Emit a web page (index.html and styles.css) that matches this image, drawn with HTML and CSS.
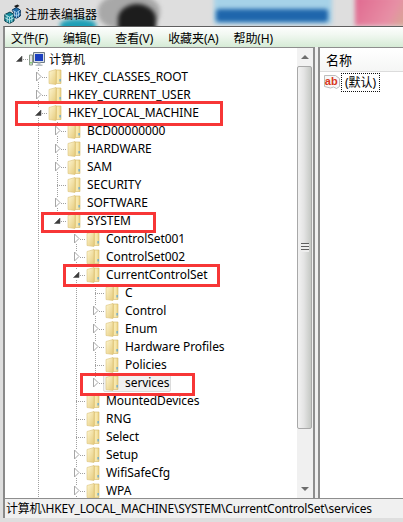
FILE: index.html
```html
<!DOCTYPE html>
<html lang="zh-CN">
<head>
<meta charset="utf-8">
<title>注册表编辑器</title>
<link rel="stylesheet" href="styles.css">
</head>
<body>
<svg class="defs" width="0" height="0">
  <defs>
    <linearGradient id="fl" x1="0" y1="0" x2="1" y2="1"><stop offset="0" stop-color="#fdf6d2"/><stop offset="1" stop-color="#e6cb7c"/></linearGradient>
    <linearGradient id="fr" x1="0" y1="0" x2="1" y2="0"><stop offset="0" stop-color="#cfa94c"/><stop offset=".45" stop-color="#fbeeb6"/><stop offset="1" stop-color="#ead083"/></linearGradient>
    <symbol id="folder" viewBox="0 0 14 16">
      <path d="M7 1h6v13.500h-6z" fill="url(#fr)" stroke="#d4b868" stroke-width=".6"/>
      <path d="M1 2.500 8 .5v15l-7-1z" fill="url(#fl)" stroke="#dcc27a" stroke-width=".6"/>
      <path d="M11.500 10h1.200v2.500h-1.200z" fill="#5aa5dc"/>
    </symbol>
    <symbol id="closed" viewBox="0 0 7 11">
      <path d="M1.500 1v9l4.500-4.500z" fill="#fff" stroke="#a6a6a6"/>
    </symbol>
    <symbol id="open" viewBox="0 0 7 11">
      <path d="M.5 8.500 6 3v5.500z" fill="#3c3c3c" stroke="#555" stroke-width=".6"/>
    </symbol>
  </defs>
</svg>
<div class="page">
  <div class="backdrop">
    <span class="blob b-gray"></span>
    <span class="blob b-dark"></span>
    <span class="blob b-teal"></span>
    <span class="blob b-sky"></span>
    <span class="blob b-blue"></span>
    <span class="blob b-pink"></span>
  </div>
  <header class="titlebar">
    <svg class="appicon" width="17" height="20" viewBox="0 0 17 20">
      <path d="M.8 10.500 6 8l4 2.500v6.500L5.500 19.500.8 17z" fill="#148a9c" stroke="#0b3f4c"/>
      <path d="M.8 10.500 5.500 13v6.500M5.500 13l4.500-2.500M3.200 11.800v6.400M7.800 11.800v6.400M.8 13.700l4.700 2.500 4.500-2.500" fill="none" stroke="#c9eef0" stroke-width=".8"/>
      <path d="M8 6l4.500-2.500L16.300 6v6l-3.800 2.300L10 13V9z" fill="#1d6aa8" stroke="#0c3458"/>
      <path d="M8.500 6.300l4 2.200v5.800M12.500 8.500 16.300 6M10.500 7.500v5M14.500 7.200v5.500M10 10.500l2.500 1.300 3.800-2.300" fill="none" stroke="#c6e4f6" stroke-width=".7"/>
      <path d="M10 2 13.500.5 15.500 2 12 3.800z" fill="#1b1b1b"/>
    </svg>
    <span class="apptitle">注册表编辑器</span>
  </header>
  <main class="window">
    <nav class="menubar">
      <span>文件(F)</span><span>编辑(E)</span><span>查看(V)</span><span>收藏夹(A)</span><span>帮助(H)</span>
    </nav>
    <div class="panes">
      <section class="treepane">
        <div class="tree">
          <div class="row">
            <span class="c t nostem"><svg class="arrow"><use href="#open"/></svg></span>
            <svg class="pc" width="16" height="16" viewBox="0 0 16 16">
              <path d="M.5 4h3v10h-3z" fill="#e6e6e6" stroke="#8a9a8a"/>
              <path d="M1.300 11h1.400v1.500h-1.400z" fill="#62c04a"/>
              <path d="M4.500 1.500h11v10h-11z" fill="#d9dfe6" stroke="#6d7a86"/>
              <path d="M6 3h8v7h-8z" fill="#1a3fc0"/>
              <path d="M8.500 11.500h3v2h-3zM6.500 13.500h7v1.500h-7z" fill="#b9c0c6"/>
            </svg>
            <span class="lbl cjk">计算机</span>
          </div>
          <div class="row"><span class="c"></span><span class="c t"><svg class="arrow"><use href="#closed"/></svg></span><svg class="fd"><use href="#folder"/></svg><span class="lbl">HKEY_CLASSES_ROOT</span></div>
          <div class="row"><span class="c"></span><span class="c t"><svg class="arrow"><use href="#closed"/></svg></span><svg class="fd"><use href="#folder"/></svg><span class="lbl">HKEY_CURRENT_USER</span></div>
          <div class="row"><span class="c"></span><span class="c t"><svg class="arrow"><use href="#open"/></svg></span><svg class="fd"><use href="#folder"/></svg><span class="lbl">HKEY_LOCAL_MACHINE</span></div>

          <div class="row"><span class="c"></span><span class="c g"></span><span class="c t"><svg class="arrow"><use href="#closed"/></svg></span><svg class="fd"><use href="#folder"/></svg><span class="lbl">BCD00000000</span></div>
          <div class="row"><span class="c"></span><span class="c g"></span><span class="c t"><svg class="arrow"><use href="#closed"/></svg></span><svg class="fd"><use href="#folder"/></svg><span class="lbl">HARDWARE</span></div>
          <div class="row"><span class="c"></span><span class="c g"></span><span class="c t"><svg class="arrow"><use href="#closed"/></svg></span><svg class="fd"><use href="#folder"/></svg><span class="lbl">SAM</span></div>
          <div class="row"><span class="c"></span><span class="c g"></span><span class="c t"></span><svg class="fd"><use href="#folder"/></svg><span class="lbl">SECURITY</span></div>
          <div class="row"><span class="c"></span><span class="c g"></span><span class="c t"><svg class="arrow"><use href="#closed"/></svg></span><svg class="fd"><use href="#folder"/></svg><span class="lbl">SOFTWARE</span></div>
          <div class="row"><span class="c"></span><span class="c g"></span><span class="c t last"><svg class="arrow"><use href="#open"/></svg></span><svg class="fd"><use href="#folder"/></svg><span class="lbl">SYSTEM</span></div>

          <div class="row"><span class="c"></span><span class="c g"></span><span class="c"></span><span class="c t"><svg class="arrow"><use href="#closed"/></svg></span><svg class="fd"><use href="#folder"/></svg><span class="lbl">ControlSet001</span></div>
          <div class="row"><span class="c"></span><span class="c g"></span><span class="c"></span><span class="c t"><svg class="arrow"><use href="#closed"/></svg></span><svg class="fd"><use href="#folder"/></svg><span class="lbl">ControlSet002</span></div>
          <div class="row"><span class="c"></span><span class="c g"></span><span class="c"></span><span class="c t"><svg class="arrow"><use href="#open"/></svg></span><svg class="fd"><use href="#folder"/></svg><span class="lbl">CurrentControlSet</span></div>

          <div class="row"><span class="c"></span><span class="c g"></span><span class="c"></span><span class="c g"></span><span class="c t"></span><svg class="fd"><use href="#folder"/></svg><span class="lbl">C</span></div>
          <div class="row"><span class="c"></span><span class="c g"></span><span class="c"></span><span class="c g"></span><span class="c t"><svg class="arrow"><use href="#closed"/></svg></span><svg class="fd"><use href="#folder"/></svg><span class="lbl">Control</span></div>
          <div class="row"><span class="c"></span><span class="c g"></span><span class="c"></span><span class="c g"></span><span class="c t"><svg class="arrow"><use href="#closed"/></svg></span><svg class="fd"><use href="#folder"/></svg><span class="lbl">Enum</span></div>
          <div class="row"><span class="c"></span><span class="c g"></span><span class="c"></span><span class="c g"></span><span class="c t"><svg class="arrow"><use href="#closed"/></svg></span><svg class="fd"><use href="#folder"/></svg><span class="lbl">Hardware Profiles</span></div>
          <div class="row"><span class="c"></span><span class="c g"></span><span class="c"></span><span class="c g"></span><span class="c t"></span><svg class="fd"><use href="#folder"/></svg><span class="lbl">Policies</span></div>
          <div class="row"><span class="c"></span><span class="c g"></span><span class="c"></span><span class="c g"></span><span class="c t last"><svg class="arrow"><use href="#closed"/></svg></span><span class="sel"><svg class="fd"><use href="#folder"/></svg><span class="lbl">services</span></span></div>

          <div class="row"><span class="c"></span><span class="c g"></span><span class="c"></span><span class="c t"></span><svg class="fd"><use href="#folder"/></svg><span class="lbl">MountedDevices</span></div>
          <div class="row"><span class="c"></span><span class="c g"></span><span class="c"></span><span class="c t"></span><svg class="fd"><use href="#folder"/></svg><span class="lbl">RNG</span></div>
          <div class="row"><span class="c"></span><span class="c g"></span><span class="c"></span><span class="c t"></span><svg class="fd"><use href="#folder"/></svg><span class="lbl">Select</span></div>
          <div class="row"><span class="c"></span><span class="c g"></span><span class="c"></span><span class="c t"><svg class="arrow"><use href="#closed"/></svg></span><svg class="fd"><use href="#folder"/></svg><span class="lbl">Setup</span></div>
          <div class="row"><span class="c"></span><span class="c g"></span><span class="c"></span><span class="c t"><svg class="arrow"><use href="#closed"/></svg></span><svg class="fd"><use href="#folder"/></svg><span class="lbl">WifiSafeCfg</span></div>
          <div class="row"><span class="c"></span><span class="c g"></span><span class="c"></span><span class="c t"><svg class="arrow"><use href="#closed"/></svg></span><svg class="fd"><use href="#folder"/></svg><span class="lbl">WPA</span></div>
        </div>
        <div class="scrollbar">
          <div class="sbtn"><span class="up"></span></div>
          <div class="thumb"><span class="grip"></span></div>
          <div class="track"></div>
          <div class="sbtn"><span class="down"></span></div>
        </div>
      </section>
      <section class="listpane">
        <div class="listhead">名称</div>
        <div class="listrow">
          <svg class="abicon" width="16" height="16" viewBox="0 0 16 16">
            <path d="M.5 1.500h11l4 3v8l-3 2-3-1.500-3 1-6-1.500z" fill="#f7f7f7" stroke="#bdbdbd"/>
            <text x=".8" y="11" class="abtext">ab</text>
          </svg>
          <span class="focus">(默认)</span>
        </div>
      </section>
    </div>
    <footer class="status">计算机\HKEY_LOCAL_MACHINE\SYSTEM\CurrentControlSet\services</footer>
  </main>
  <div class="mark m1"></div>
  <div class="mark m2"></div>
  <div class="mark m3"></div>
  <div class="mark m4"></div>
</div>
</body>
</html>
```
FILE: styles.css
```css
* { box-sizing: border-box; }
html, body { margin: 0; padding: 0; }
body {
  width: 403px;
  height: 522px;
  overflow: hidden;
  font-family: "Noto Sans", "Noto Sans CJK SC", sans-serif;
  font-size: 12px;
  color: #000;
}
.defs { position: absolute; }
.page {
  position: relative;
  width: 403px;
  height: 522px;
  padding-left: 3px;
  overflow: hidden;
  background: #dedede;
}
.backdrop {
  position: absolute;
  left: 0;
  top: 0;
  width: 403px;
  height: 30px;
  overflow: hidden;
}
.blob { position: absolute; display: block; filter: blur(2px); }
.b-gray { left: 98px; top: -6px; width: 62px; height: 36px; background: #a8a8a8; border-radius: 45%; }
.b-dark { left: 118px; top: 4px; width: 38px; height: 30px; background: #1d1d1d; border-radius: 50% 50% 10% 10%; }
.b-teal { left: 60px; top: 19px; width: 36px; height: 14px; background: #1e9fb6; border-radius: 40%; }
.b-sky { left: 214px; top: -6px; width: 118px; height: 30px; background: #a6d2e8; }
.b-blue { left: 216px; top: 9px; width: 112px; height: 13px; background: #1f66ac; border-radius: 3px; }
.b-pink { left: 355px; top: -4px; width: 54px; height: 30px; background: linear-gradient(120deg, #e0688f, #e78fa5 65%, #d2ae90); }
.titlebar {
  position: relative;
  display: flex;
  align-items: center;
  height: 26px;
  margin-left: 1px;
}
.appicon { display: block; flex: none; margin-top: 2px; }
.apptitle {
  margin-left: 4px;
  font-family: "Noto Sans CJK SC", sans-serif;
  font-size: 12px;
  color: #000;
}
.window {
  position: relative;
  width: 400px;
  height: 492px;
  border-top: 1px solid #5f5f5f;
  border-left: 2px solid #8a8a8a;
  background: #fff;
  display: flex;
  flex-direction: column;
}
.menubar {
  flex: none;
  height: 20px;
  display: flex;
  gap: 15px;
  align-items: center;
  padding-left: 6px;
  letter-spacing: -.1px;
  background: linear-gradient(#fbfdfb, #f1f8f1 35%, #d6ebd6);
  border-top: 1px solid #fff;
}
.panes {
  flex: none;
  height: 451px;
  display: flex;
  background: #f0f0f0;
}
.treepane {
  width: 310px;
  flex: none;
  display: flex;
  background: #fff;
  border-top: 1px solid #8e8e8e;
  border-right: 2px solid #8e8e8e;
  overflow: hidden;
}
.tree {
  flex: 1;
  min-width: 0;
  padding: 2px 0 0 5px;
  overflow: hidden;
}
.row {
  display: flex;
  align-items: center;
  height: 18px;
  flex: none;
  white-space: nowrap;
}
.c {
  flex: none;
  width: 19px;
  height: 18px;
  position: relative;
  display: block;
}
.g {
  background: repeating-linear-gradient(#a0a0a0 0 1px, transparent 1px 2px) 9px 0 / 1px 18px no-repeat;
}
.t {
  background:
    repeating-linear-gradient(#a0a0a0 0 1px, transparent 1px 2px) 9px 0 / 1px 18px no-repeat,
    repeating-linear-gradient(90deg, #a0a0a0 0 1px, transparent 1px 2px) 9px 9px / 10px 1px no-repeat;
}
.t.last {
  background:
    repeating-linear-gradient(#a0a0a0 0 1px, transparent 1px 2px) 9px 0 / 1px 9px no-repeat,
    repeating-linear-gradient(90deg, #a0a0a0 0 1px, transparent 1px 2px) 9px 9px / 10px 1px no-repeat;
}
.t.nostem {
  background:
    repeating-linear-gradient(90deg, #a0a0a0 0 1px, transparent 1px 2px) 9px 9px / 10px 1px no-repeat;
}
.arrow {
  position: absolute;
  left: 6px;
  top: 3px;
  width: 7px;
  height: 11px;
  background: #fff;
  display: block;
}
.fd { flex: none; width: 14px; height: 16px; display: block; }
.pc { flex: none; display: block; }
.lbl { margin-left: 6px; letter-spacing: -.06px; line-height: 18px; color: #000; }
.lbl.cjk { font-family: "Noto Sans CJK SC", sans-serif; margin-left: 4px; letter-spacing: 0; }
.sel {
  display: flex;
  align-items: center;
  height: 18px;
  padding-right: 1px;
  background: #f1f1f1;
  border: 1px solid #dcdcdc;
  border-radius: 2px;
  margin-left: -2px;
}
.sel .fd { margin-left: 1px; }
.scrollbar {
  flex: none;
  width: 16px;
  display: flex;
  flex-direction: column;
  background: #f0f0f0;
}
.sbtn {
  flex: none;
  height: 18px;
  display: flex;
  align-items: center;
  justify-content: center;
  background: #f2f2f2;
}
.up, .down { width: 0; height: 0; border-left: 4px solid transparent; border-right: 4px solid transparent; }
.up { border-bottom: 4px solid #6e6e6e; }
.down { border-top: 4px solid #6e6e6e; }
.thumb {
  flex: none;
  height: 363px;
  width: 15px;
  display: flex;
  align-items: center;
  justify-content: center;
  background: linear-gradient(90deg, #f2f2f2, #e4e4e4 45%, #c5c8c4);
  border: 1px solid #a8a8a8;
  border-radius: 2px;
}
.grip {
  width: 8px;
  height: 9px;
  background: repeating-linear-gradient(#5e5e5e 0 1px, #ededed 1px 3px);
}
.track { flex: 1; background: #f0f0f0; }
.listpane {
  margin-left: 3px;
  flex: 1;
  min-width: 0;
  background: #fff;
  border-top: 1px solid #8e8e8e;
  border-left: 2px solid #8e8e8e;
}
.listhead {
  height: 24px;
  padding-left: 6px;
  line-height: 23px;
  font-family: "Noto Sans CJK SC", sans-serif;
  font-size: 13px;
  background: linear-gradient(#fff, #f5f6f5);
  border-bottom: 1px solid #dcdcdc;
}
.listrow {
  display: flex;
  align-items: center;
  height: 20px;
  padding-left: 4px;
}
.abicon { flex: none; display: block; }
.abtext { font: bold 11px "Liberation Sans", sans-serif; fill: #d8381c; }
.focus {
  margin-left: 1px;
  padding: 0 3px;
  height: 19px;
  line-height: 17px;
  border: 1px dotted #111;
}
.status {
  flex: none;
  height: 20px;
  line-height: 19px;
  padding-left: 1px;
  letter-spacing: -.21px;
  background: #f0f0f0;
  border-top: 1px solid #8e8e8e;
  white-space: nowrap;
}
.mark {
  position: absolute;
  border: 3px solid #f73636;
}
.m1 { left: 15px; top: 101px; width: 208px; height: 25px; }
.m2 { left: 41px; top: 212px; width: 115px; height: 21px; }
.m3 { left: 63px; top: 264px; width: 157px; height: 23px; }
.m4 { left: 80px; top: 373px; width: 115px; height: 23px; }
```
